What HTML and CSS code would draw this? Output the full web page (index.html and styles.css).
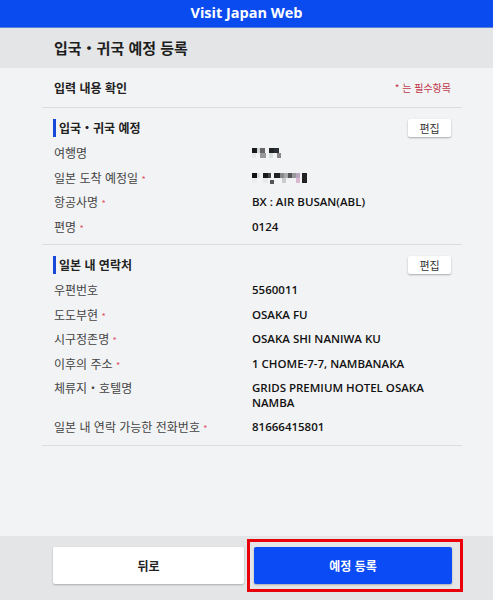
FILE: index.html
```html
<!DOCTYPE html>
<html lang="ko">
<head>
    <meta charset="UTF-8">
    <meta name="viewport" content="width=device-width, initial-scale=1.0">
    <title>Visit Japan Web</title>
    <link rel="stylesheet" href="styles.css">
</head>
<body>
    <div class="pagina">
        <div class="cabecera">Visit Japan Web</div>
        <div class="titulo">입국・귀국 예정 등록</div>

        <div class="contenido">
            <div class="confirmar">
                <span>입력 내용 확인</span>
                <span class="requerido">* 는 필수항목</span>
            </div>

            <!-- 입국・귀국 예정 -->
            <div class="seccion">
                <div class="seccion-cab">
                    <span class="seccion-titulo">입국・귀국 예정</span>
                    <button class="editar">편집</button>
                </div>
                <div class="fila">
                    <span class="etiqueta">여행명</span>
                    <span class="valor">
                        <svg width="32" height="10" viewBox="0 0 32 10">
                            <rect x="0" y="0" width="5" height="5" fill="#1a1a1a"/>
                            <rect x="5" y="0" width="3" height="5" fill="#cfd6d6"/>
                            <rect x="8" y="0" width="5" height="5" fill="#666"/>
                            <rect x="17" y="0" width="5" height="5" fill="#222"/>
                            <rect x="22" y="0" width="5" height="5" fill="#2a3036"/>
                            <rect x="0" y="5" width="4" height="5" fill="#e4e8e8"/>
                            <rect x="8" y="5" width="6" height="5" fill="#999"/>
                            <rect x="17" y="5" width="4" height="5" fill="#d8e0e0"/>
                            <rect x="25" y="5" width="4" height="5" fill="#888"/>
                        </svg>
                    </span>
                </div>
                <div class="fila">
                    <span class="etiqueta">일본 도착 예정일 <i>*</i></span>
                    <span class="valor">
                        <svg width="58" height="11" viewBox="0 0 58 11">
                            <rect x="0" y="0" width="5" height="5" fill="#111"/>
                            <rect x="5" y="0" width="3" height="5" fill="#ddd"/>
                            <rect x="11" y="0" width="5" height="5" fill="#1a1a1a"/>
                            <rect x="16" y="0" width="3" height="5" fill="#444"/>
                            <rect x="22" y="0" width="6" height="5" fill="#222"/>
                            <rect x="28" y="0" width="4" height="5" fill="#888"/>
                            <rect x="32" y="0" width="4" height="5" fill="#aaa"/>
                            <rect x="36" y="0" width="4" height="5" fill="#555"/>
                            <rect x="40" y="0" width="4" height="5" fill="#999"/>
                            <rect x="44" y="0" width="4" height="5" fill="#b9a6bf"/>
                            <rect x="50" y="0" width="5" height="10" fill="#222"/>
                            <rect x="0" y="5" width="5" height="5" fill="#eceeee"/>
                            <rect x="11" y="5" width="5" height="5" fill="#e6eaea"/>
                            <rect x="18" y="7" width="4" height="4" fill="#555"/>
                            <rect x="30" y="5" width="4" height="5" fill="#ccc"/>
                            <rect x="44" y="5" width="4" height="5" fill="#d9b8d0"/>
                        </svg>
                    </span>
                </div>
                <div class="fila">
                    <span class="etiqueta">항공사명 <i>*</i></span>
                    <span class="valor">BX : AIR BUSAN(ABL)</span>
                </div>
                <div class="fila">
                    <span class="etiqueta">편명 <i>*</i></span>
                    <span class="valor">0124</span>
                </div>
            </div>

            <!-- 일본 내 연락처 -->
            <div class="seccion">
                <div class="seccion-cab">
                    <span class="seccion-titulo">일본 내 연락처</span>
                    <button class="editar">편집</button>
                </div>
                <div class="fila">
                    <span class="etiqueta">우편번호</span>
                    <span class="valor">5560011</span>
                </div>
                <div class="fila">
                    <span class="etiqueta">도도부현 <i>*</i></span>
                    <span class="valor">OSAKA FU</span>
                </div>
                <div class="fila">
                    <span class="etiqueta">시구정존명 <i>*</i></span>
                    <span class="valor">OSAKA SHI NANIWA KU</span>
                </div>
                <div class="fila">
                    <span class="etiqueta">이후의 주소 <i>*</i></span>
                    <span class="valor">1 CHOME-7-7, NAMBANAKA</span>
                </div>
                <div class="fila fila-doble">
                    <span class="etiqueta">체류지・호텔명</span>
                    <span class="valor">GRIDS PREMIUM HOTEL OSAKA NAMBA</span>
                </div>
                <div class="fila">
                    <span class="etiqueta">일본 내 연락 가능한 전화번호 <i>*</i></span>
                    <span class="valor">81666415801</span>
                </div>
            </div>
        </div>

        <div class="pie">
            <button class="boton boton-volver">뒤로</button>
            <div class="marcado">
                <button class="boton boton-registrar">예정 등록</button>
            </div>
        </div>
    </div>
</body>
</html>
```

FILE: styles.css
```css
body {
    margin: 0;
    font-family: "Noto Sans CJK KR", "Open Sans", sans-serif;
    color: #222;
}
.pagina {
    width: 493px;
    height: 600px;
    display: flex;
    flex-direction: column;
    background: #f2f3f4;
}
.cabecera {
    height: 27px;
    background: #0a4bf0;
    color: #fff;
    font-family: "Open Sans", sans-serif;
    font-weight: 700;
    font-size: 14.5px;
    line-height: 26px;
    text-align: center;
    border-bottom: 1px solid #5b7fd6;
}
.titulo {
    height: 40px;
    background: #e4e5e6;
    padding-left: 54px;
    font-size: 15px;
    font-weight: 700;
    line-height: 40px;
    color: #1e1e1e;
}
.contenido {
    flex: 1;
    padding: 0 31px 0 42px;
}
.confirmar {
    height: 39px;
    display: flex;
    justify-content: space-between;
    align-items: center;
    padding: 0 11px 0 12px;
    border-bottom: 1px solid #dcdde0;
    font-size: 12px;
    font-weight: 700;
}
.requerido {
    color: #c0394b;
    font-size: 10px;
    font-weight: 400;
}
.seccion {
    padding: 11px 11px 5px 12px;
    border-bottom: 1px solid #dcdde0;
}
.seccion-cab {
    height: 18px;
    display: flex;
    justify-content: space-between;
    align-items: center;
    margin-bottom: 4px;
}
.seccion-titulo {
    border-left: 3px solid #1948d8;
    padding-left: 3px;
    margin-left: -1px;
    height: 18px;
    line-height: 18px;
    font-size: 12px;
    font-weight: 700;
}
.editar {
    width: 43px;
    height: 18px;
    padding: 0;
    border: none;
    border-radius: 2px;
    background: #fff;
    box-shadow: 0 1px 2px rgba(0, 0, 0, 0.3);
    font-family: "Noto Sans CJK KR", sans-serif;
    font-size: 11px;
    color: #333;
}
.fila {
    display: flex;
    align-items: flex-start;
    height: 14.5px;
    padding: 5px 0;
    line-height: 14.5px;
    font-size: 12px;
}
.fila-doble {
    height: 29px;
}
.etiqueta {
    width: 198px;
    flex: none;
    color: #444;
}
.etiqueta i {
    font-style: normal;
    color: #e0506a;
    font-size: 9px;
    line-height: 0;
}
.valor {
    font-family: "Open Sans", "Noto Sans CJK KR", sans-serif;
    font-size: 11.5px;
    font-weight: 600;
    color: #111;
}
.valor svg {
    display: block;
    margin-top: 2px;
}
.pie {
    height: 64px;
    background: #e4e5e6;
    display: flex;
    align-items: flex-start;
    padding-left: 53px;
    gap: 3px;
}
.boton {
    height: 37px;
    border: none;
    border-radius: 2px;
    font-family: "Noto Sans CJK KR", sans-serif;
    font-size: 12px;
    font-weight: 700;
    padding: 0;
}
.boton-volver {
    width: 191px;
    margin-top: 11px;
    background: #fff;
    color: #222;
    box-shadow: 0 1px 2px rgba(0, 0, 0, 0.25);
}
.marcado {
    margin-top: 3px;
    border: 3px solid #e8000b;
    padding: 5px 8px 5px 4px;
}
.boton-registrar {
    width: 198px;
    display: block;
    background: #0a4bf5;
    color: #fff;
    box-shadow: 0 1px 2px rgba(0, 0, 0, 0.25);
}
```
